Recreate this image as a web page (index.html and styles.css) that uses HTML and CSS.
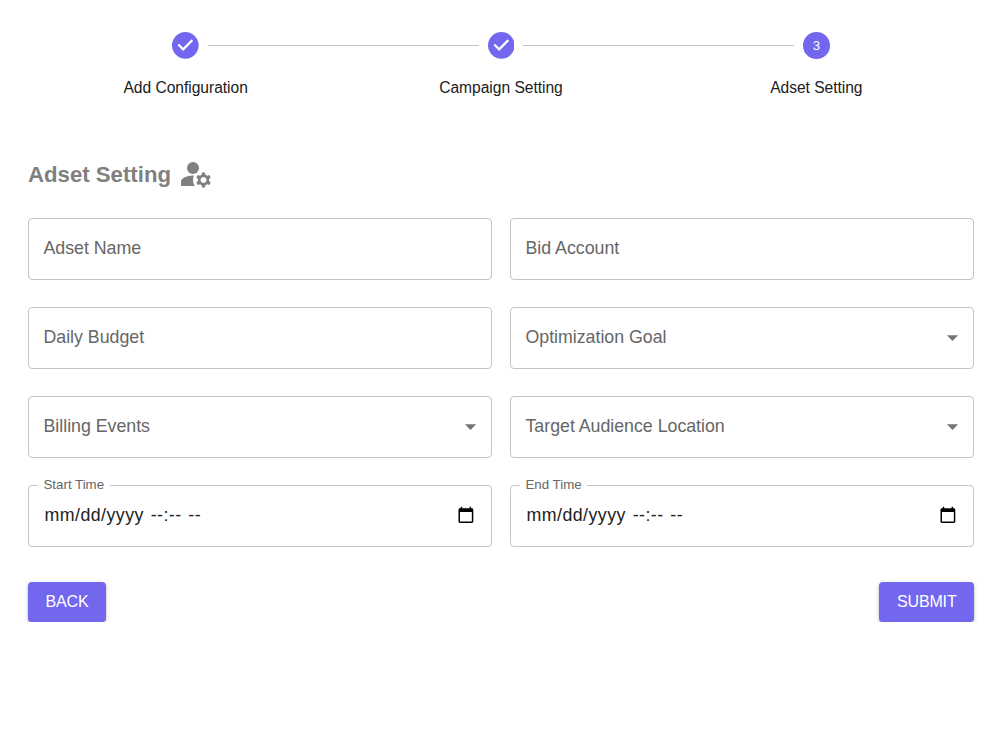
FILE: index.html
```html
<!DOCTYPE html>
<html lang="en">

<head>
    <meta charset="UTF-8" />
    <title>Adset Setting</title>
    <link rel="stylesheet" href="styles.css">
</head>

<body>
    <div class="stepper">
        <div class="step">
            <div class="step-row">
                <span class="line hidden"></span>
                <svg class="step-icon" viewBox="0 0 24 24"><path d="M12 0a12 12 0 1 0 0 24 12 12 0 0 0 0-24zm-2 17l-5-5 1.4-1.4 3.6 3.6 7.6-7.6L19 8l-9 9z" /></svg>
                <span class="line"></span>
            </div>
            <div class="step-label">Add Configuration</div>
        </div>
        <div class="step">
            <div class="step-row">
                <span class="line"></span>
                <svg class="step-icon" viewBox="0 0 24 24"><path d="M12 0a12 12 0 1 0 0 24 12 12 0 0 0 0-24zm-2 17l-5-5 1.4-1.4 3.6 3.6 7.6-7.6L19 8l-9 9z" /></svg>
                <span class="line"></span>
            </div>
            <div class="step-label">Campaign Setting</div>
        </div>
        <div class="step">
            <div class="step-row">
                <span class="line"></span>
                <span class="step-number">3</span>
                <span class="line hidden"></span>
            </div>
            <div class="step-label">Adset Setting</div>
        </div>
    </div>

    <h2 class="title">
        <span class="title-text">Adset Setting</span>
        <svg class="title-icon" viewBox="0 0 24 24">
            <circle cx="10" cy="8" r="4" />
            <path d="M10.67 13.02C10.45 13.01 10.23 13 10 13c-2.42 0-4.68.67-6.61 1.82-.88.52-1.39 1.5-1.39 2.53V20h9.26c-.79-1.13-1.26-2.51-1.26-4 0-1.07.25-2.07.67-2.98z" />
            <path d="M20.75 16c0-.22-.03-.42-.06-.63l1.14-1.01-1-1.73-1.45.49c-.32-.27-.68-.48-1.08-.63L18 11h-2l-.3 1.49c-.4.15-.76.36-1.08.63l-1.45-.49-1 1.73 1.14 1.01c-.03.21-.06.41-.06.63s.03.42.06.63l-1.14 1.01 1 1.73 1.45-.49c.32.27.68.48 1.08.63L16 21h2l.3-1.49c.4-.15.76-.36 1.08-.63l1.45.49 1-1.73-1.14-1.01c.03-.21.06-.41.06-.63zM17 18c-1.1 0-2-.9-2-2s.9-2 2-2 2 .9 2 2-.9 2-2 2z" />
        </svg>
    </h2>

    <div class="fields">
        <div class="field">Adset Name</div>
        <div class="field">Bid Account</div>
        <div class="field">Daily Budget</div>
        <div class="field">Optimization Goal
            <svg class="arrow" viewBox="0 0 24 24"><path d="M7 10l5 5 5-5z" /></svg>
        </div>
        <div class="field">Billing Events
            <svg class="arrow" viewBox="0 0 24 24"><path d="M7 10l5 5 5-5z" /></svg>
        </div>
        <div class="field">Target Audience Location
            <svg class="arrow" viewBox="0 0 24 24"><path d="M7 10l5 5 5-5z" /></svg>
        </div>
        <div class="field date">
            <span class="float-label">Start Time</span>
            <span class="date-text">mm/dd/yyyy --:-- --</span>
            <svg class="calendar" viewBox="0 0 24 24"><path d="M20 3h-1V1h-2v2H7V1H5v2H4c-1.1 0-2 .9-2 2v16c0 1.1.9 2 2 2h16c1.1 0 2-.9 2-2V5c0-1.1-.9-2-2-2zm0 18H4V8h16v13z" /></svg>
        </div>
        <div class="field date">
            <span class="float-label">End Time</span>
            <span class="date-text">mm/dd/yyyy --:-- --</span>
            <svg class="calendar" viewBox="0 0 24 24"><path d="M20 3h-1V1h-2v2H7V1H5v2H4c-1.1 0-2 .9-2 2v16c0 1.1.9 2 2 2h16c1.1 0 2-.9 2-2V5c0-1.1-.9-2-2-2zm0 18H4V8h16v13z" /></svg>
        </div>
    </div>

    <div class="actions">
        <button class="btn">BACK</button>
        <button class="btn">SUBMIT</button>
    </div>
</body>

</html>
```

FILE: styles.css
```css
body {
    margin: 0;
    padding: 32px 26px 0 28px;
    background: #fff;
    font-family: "Liberation Sans", Arial, sans-serif;
}

.stepper {
    display: flex;
}

.step {
    flex: 1;
}

.step-row {
    display: flex;
    align-items: center;
    height: 27px;
}

.line {
    flex: 1;
    height: 1px;
    background: #c4c4c4;
}

.step-icon + .line,
.step-number + .line {
    margin-left: 9px;
}

.line:first-child {
    margin-right: 9px;
}

.line.hidden {
    visibility: hidden;
}

.step-icon {
    width: 26.67px;
    height: 26.67px;
    fill: #7367f0;
}

.step-number {
    width: 26.67px;
    height: 26.67px;
    border-radius: 50%;
    background: #7367f0;
    color: #fff;
    font-size: 13.3px;
    line-height: 28px;
    text-align: center;
}

.step-label {
    margin-top: 18px;
    font-size: 15.6px;
    line-height: 22px;
    letter-spacing: -0.03px;
    text-align: center;
    color: #212121;
}

.title {
    display: flex;
    align-items: center;
    gap: 6.5px;
    height: 36px;
    margin: 57px 0 26px;
    font-size: 22.2px;
    color: #808080;
}

.title-text {
    padding-top: 1px;
}

.title-icon {
    width: 36px;
    height: 36px;
    fill: #808080;
}

.fields {
    display: grid;
    grid-template-columns: 1fr 1fr;
    column-gap: 18px;
    row-gap: 27px;
}

.field {
    position: relative;
    display: flex;
    align-items: center;
    justify-content: space-between;
    box-sizing: border-box;
    height: 62px;
    padding: 0 7px 2px 14.5px;
    border: 1px solid #c4c4c4;
    border-radius: 4px;
    font-size: 17.8px;
    letter-spacing: -0.02px;
    color: #666;
}

.arrow {
    width: 27px;
    height: 27px;
    fill: #757575;
}

.date {
    padding-right: 16.5px;
    padding-left: 15.5px;
    color: #212121;
}

.date-text {
    letter-spacing: 0.45px;
    word-spacing: 1.4px;
}

/* sits over the top border and cuts the notch */
.float-label {
    position: absolute;
    top: -10px;
    left: 9px;
    padding: 0 5.5px;
    background: #fff;
    font-size: 13.3px;
    line-height: 18px;
    letter-spacing: 0;
    color: #666;
}

.calendar {
    width: 17.8px;
    height: 17.8px;
    fill: #000;
}

.actions {
    display: flex;
    justify-content: space-between;
    margin-top: 35px;
}

.btn {
    height: 40px;
    padding: 0 17.5px 1px;
    border: none;
    border-radius: 4px;
    background: #7367f0;
    box-shadow: 0 3px 1px -2px rgba(0, 0, 0, 0.25), 0 2px 2px rgba(0, 0, 0, 0.2), 0 1px 5px rgba(0, 0, 0, 0.15);
    color: #fff;
    font-family: inherit;
    font-size: 16px;
    letter-spacing: -0.15px;
}
```
